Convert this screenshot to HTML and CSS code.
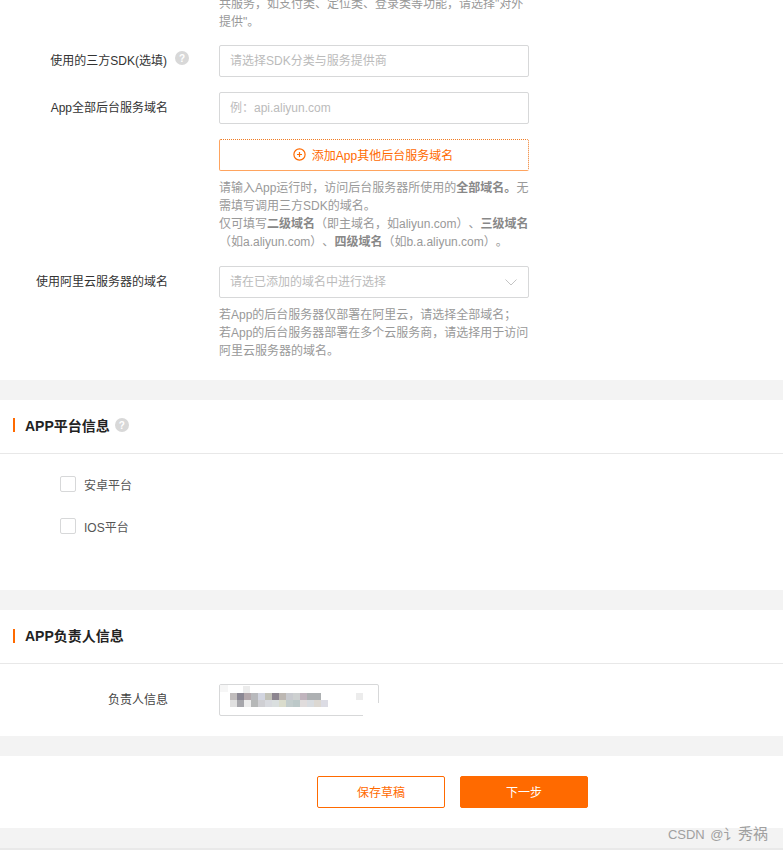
FILE: index.html
```html
<!DOCTYPE html>
<html lang="zh">
<head>
<meta charset="utf-8">
<title>APP信息</title>
<link rel="stylesheet" href="styles.css">
</head>
<body>
<div class="page">
  <section class="card card-form">
    <div class="offset">
      <p class="help help-top">共服务，如支付类、定位类、登录类等功能，请选择"对外提供"。</p>
    </div>
    <div class="row">
      <label class="label label-tip">使用的三方SDK(选填)<span class="tip">?</span></label>
      <div class="input placeholder">请选择SDK分类与服务提供商</div>
    </div>
    <div class="row">
      <label class="label">App全部后台服务域名</label>
      <div class="input placeholder">例：api.aliyun.com</div>
    </div>
    <div class="offset">
      <button class="add">
        <svg class="add-icon" width="13" height="13" viewBox="0 0 13 13"><circle cx="6.5" cy="6.5" r="5.6" fill="none" stroke="#ff6a00" stroke-width="1.2"/><path d="M4 6.5h5M6.5 4v5" stroke="#ff6a00" stroke-width="1.2" fill="none"/></svg>
        <span class="add-text">添加App其他后台服务域名</span>
      </button>
      <p class="help help-after">请输入App运行时，访问后台服务器所使用的<b>全部域名。</b>无需填写调用三方SDK的域名。<br>仅可填写<b>二级域名</b>（即主域名，如aliyun.com）、<b>三级域名</b>（如a.aliyun.com）、<b>四级域名</b>（如b.a.aliyun.com）。</p>
    </div>
    <div class="row row-tight">
      <label class="label">使用阿里云服务器的域名</label>
      <div class="input placeholder select">请在已添加的域名中进行选择
        <svg width="12" height="7" viewBox="0 0 12 7"><path d="M.5.5l5.5 5.5 5.5-5.5" fill="none" stroke="#c4c4c4"/></svg>
      </div>
    </div>
    <div class="offset">
      <p class="help help-after">若App的后台服务器仅部署在阿里云，请选择全部域名；<br>若App的后台服务器部署在多个云服务商，请选择用于访问阿里云服务器的域名。</p>
    </div>
  </section>

  <section class="card card-platform">
    <h2 class="head">APP平台信息<span class="tip tip-head">?</span></h2>
    <div class="checks">
      <label class="check"><span class="box"></span>安卓平台</label>
      <label class="check"><span class="box"></span>IOS平台</label>
    </div>
  </section>

  <section class="card card-owner">
    <h2 class="head head-low">APP负责人信息</h2>
    <div class="owner">
      <label class="owner-label">负责人信息</label>
      <div class="input input-short">
        <div class="mosaic">
          <div class="m-row">
            <i style="background:#c0bcbc"></i><i style="background:#8a8793"></i><i style="background:#b3a8ac"></i><i style="background:#b8b9bc"></i><i style="background:#d2d5e0"></i><i style="background:#c2c2b8"></i><i style="background:#8d8690"></i><i style="background:#bcb7b2"></i><i style="background:#c8cacf"></i><i style="background:#cdd0d0"></i><i style="background:#c0b4bd"></i><i style="background:#adb0b2"></i><i style="background:#adb0b2"></i>
          </div>
          <div class="m-row">
            <i style="background:#e0e0e0"></i><i style="background:#a6a6ab"></i><i style="background:#ececec"></i><i style="background:#b6b8b8"></i><i style="background:#cfcfd3"></i><i style="background:#d8dadf"></i><i style="background:#dadfdf"></i><i style="background:#dadccc"></i><i style="background:#c2cccc"></i><i style="background:#bcc8c8"></i><i style="background:#e0dcdc"></i><i style="background:#d8dce0"></i><i style="background:#dcd8d2"></i><i style="background:#dcdce4"></i>
          </div>
        </div>
        <span class="smudge smudge-a"></span>
        <span class="smudge smudge-b"></span>
        <span class="smudge smudge-c"></span>
        <span class="smudge smudge-d"></span>
      </div>
    </div>
  </section>

  <section class="card card-actions">
    <button class="btn btn-ghost">保存草稿</button>
    <button class="btn btn-primary">下一步</button>
  </section>

  <div class="page-end"></div>

  <div class="watermark"><span class="wm-latin">CSDN @</span><span class="wm-mark">讠</span> 秀祸</div>
</div>
</body>
</html>
```
FILE: styles.css
```css
* { box-sizing: border-box; }
html, body { margin: 0; height: 100%; }
body {
  background: #f3f3f3;
  font-family: "Liberation Sans", "Noto Sans CJK SC", sans-serif;
  font-size: 12px;
  color: #333;
  overflow: hidden;
  text-spacing-trim: space-all;
}
.page { position: relative; height: 850px; overflow: hidden; }
.card { background: #fff; margin-bottom: 20px; }
.card-form { height: 380px; padding-top: 45px; position: relative; }
.offset { margin-left: 219px; width: 310px; }
.help { margin: 0; line-height: 18px; color: #999; }
.help b { color: #888; }
.help-top { position: absolute; top: -5px; width: 310px; }
.help-after { margin-top: 8px; margin-bottom: 15px; }
.row { display: flex; align-items: center; margin-bottom: 15px; }
.row-tight { margin-bottom: 0; }
.label {
  position: relative;
  width: 168px;
  margin-right: 51px;
  padding-bottom: 3px;
  text-align: right;
  color: #333;
  white-space: nowrap;
}
.label-tip { padding-right: 1px; }
.tip {
  display: inline-flex;
  align-items: center;
  justify-content: center;
  width: 14px;
  height: 14px;
  border-radius: 50%;
  background: #d8d8d8;
  color: #fff;
  font-size: 10px;
  font-weight: 700;
}
.label-tip .tip { position: absolute; left: 175px; top: 0; }
.input {
  width: 310px;
  height: 32px;
  border: 1px solid #d7d8d9;
  border-radius: 2px;
  padding: 0 10px;
  line-height: 30px;
  background: #fff;
}
.placeholder { color: #bbb; }
.select { display: flex; align-items: center; justify-content: space-between; padding-right: 11px; }
.add {
  display: flex;
  align-items: center;
  justify-content: center;
  gap: 6px;
  width: 310px;
  height: 32px;
  margin: 0;
  padding: 0 2px 2px 0;
  background: #fff;
  border: 1px solid #ffa45f;
  border-top: 1px dotted #f07a20;
  border-right: 1px dotted #f07a20;
  border-radius: 2px;
  color: #ff6a00;
  font: inherit;
}
.card-platform { height: 190px; }
.head {
  position: relative;
  display: flex;
  align-items: center;
  height: 54px;
  margin: 0;
  padding: 0 0 3px 25px;
  border-bottom: 1px solid #e8e8e8;
  font-size: 14px;
  font-weight: 700;
  color: #222;
}
.head::before {
  content: "";
  position: absolute;
  left: 13px;
  top: 18px;
  width: 2px;
  height: 14px;
  background: #ff6a00;
}
.head-low::before { top: 19px; }
.tip-head { margin-left: 5px; }
.checks { padding: 22px 0 0 60px; display: flex; flex-direction: column; gap: 26px; }
.check { display: flex; align-items: center; height: 16px; color: #555; }
.box {
  width: 16px;
  height: 16px;
  margin-right: 8px;
  border: 1px solid #d7d8d9;
  border-radius: 2px;
  background: #fff;
}
.card-owner { height: 126px; }
.owner { display: flex; align-items: center; padding-top: 20px; }
.owner-label { width: 168px; margin-right: 51px; padding-bottom: 3px; text-align: right; color: #444; }
.input-short { position: relative; width: 160px; padding: 0; }
.mosaic { position: absolute; left: 10px; top: 8px; }
.m-row { display: flex; }
.m-row i { display: block; width: 7px; height: 7px; }
.smudge { position: absolute; }
.smudge-a { left: 23px; top: 1px; width: 7px; height: 7px; background: #ececec; }
.smudge-b { left: 136px; top: 8px; width: 7px; height: 7px; background: #ececec; }
.smudge-c { left: 143px; top: 18px; width: 19px; height: 15px; background: #fff; }
.smudge-d { left: 0; top: 0; width: 8px; height: 7px; background: #f6f6f6; }
.card-actions {
  display: flex;
  gap: 15px;
  height: 72px;
  margin-bottom: 20px;
  padding: 20px 0 0 317px;
}
.btn {
  width: 128px;
  height: 32px;
  margin: 0;
  padding: 0 0 2px;
  border: 1px solid #ff6a00;
  border-radius: 2px;
  font: inherit;
}
.btn-ghost { background: #fff; color: #ff6a00; }
.btn-primary { background: #ff6a00; color: #fff; }
.page-end { height: 2px; background: #e9e9e9; }
.watermark {
  position: absolute;
  right: 15px;
  top: 825px;
  font-size: 15px;
  line-height: 17px;
  color: #a0a0a0;
  white-space: pre;
  word-spacing: -3.75px;
}
.wm-latin { font-size: 13px; word-spacing: 2px; }
.wm-mark { font-size: 14px; }
```
